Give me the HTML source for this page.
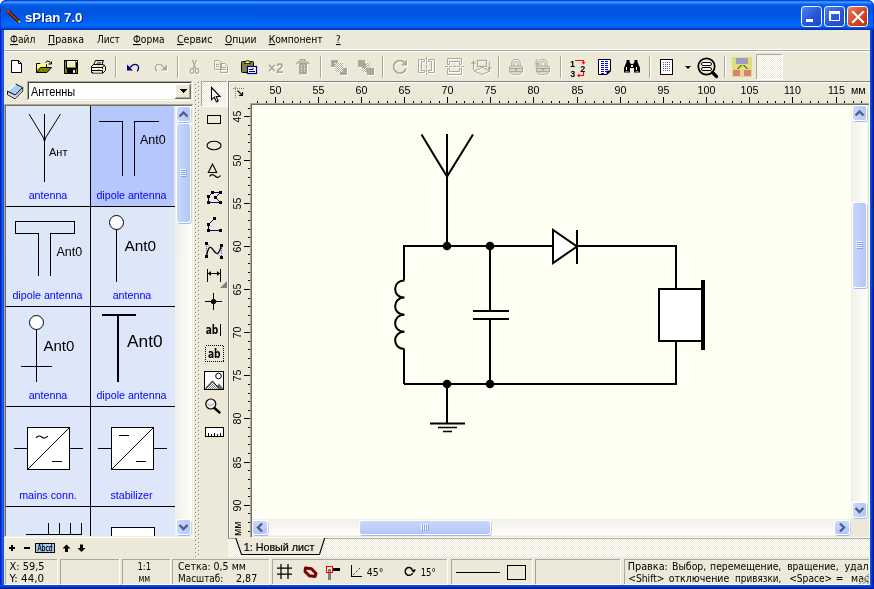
<!DOCTYPE html>
<html><head><meta charset="utf-8"><title>sPlan 7.0</title>
<style>
html,body{margin:0;padding:0;background:#ECE9D8;overflow:hidden}
svg{display:block;will-change:transform;opacity:0.9999}
text{white-space:pre}
.c{shape-rendering:crispEdges}
</style></head><body>
<svg width="874" height="589" viewBox="0 0 874 589">
<defs>
<pattern id="hatch" width="2" height="2" patternUnits="userSpaceOnUse"><rect width="2" height="2" fill="#ECE9D8"/><rect width="1" height="1" fill="#fff"/><rect x="1" y="1" width="1" height="1" fill="#fff"/></pattern>
<linearGradient id="tb" x1="0" y1="0" x2="0" y2="1"><stop offset="0.0167" stop-color="#0846D8"/><stop offset="0.0500" stop-color="#2E80F8"/><stop offset="0.0833" stop-color="#3C96FF"/><stop offset="0.1167" stop-color="#1478FC"/><stop offset="0.1500" stop-color="#0468F4"/><stop offset="0.1833" stop-color="#025EE8"/><stop offset="0.2167" stop-color="#0058E2"/><stop offset="0.2500" stop-color="#0056E0"/><stop offset="0.2833" stop-color="#0055DF"/><stop offset="0.3167" stop-color="#0055DF"/><stop offset="0.3500" stop-color="#0055DF"/><stop offset="0.3833" stop-color="#0056E0"/><stop offset="0.4167" stop-color="#0056E1"/><stop offset="0.4500" stop-color="#0057E2"/><stop offset="0.4833" stop-color="#0057E3"/><stop offset="0.5167" stop-color="#0058E4"/><stop offset="0.5500" stop-color="#005AE6"/><stop offset="0.5833" stop-color="#005CE9"/><stop offset="0.6167" stop-color="#005EEC"/><stop offset="0.6500" stop-color="#0060F0"/><stop offset="0.6833" stop-color="#0062F3"/><stop offset="0.7167" stop-color="#0064F6"/><stop offset="0.7500" stop-color="#0066F9"/><stop offset="0.7833" stop-color="#0067FB"/><stop offset="0.8167" stop-color="#0068FC"/><stop offset="0.8500" stop-color="#0068FC"/><stop offset="0.8833" stop-color="#0064F6"/><stop offset="0.9167" stop-color="#0056E2"/><stop offset="0.9500" stop-color="#0042CC"/><stop offset="0.9833" stop-color="#0033BE"/></linearGradient>
<linearGradient id="sbv" x1="0" y1="0" x2="1" y2="0"><stop offset="0" stop-color="#F1EFE8"/><stop offset="1" stop-color="#FEFEFB"/></linearGradient>
<linearGradient id="sbh" x1="0" y1="0" x2="0" y2="1"><stop offset="0" stop-color="#F1EFE8"/><stop offset="1" stop-color="#FEFEFB"/></linearGradient>
<linearGradient id="thv" x1="0" y1="0" x2="1" y2="0"><stop offset="0" stop-color="#C9D8FC"/><stop offset="0.6" stop-color="#BDCDFA"/><stop offset="1" stop-color="#B4C6F8"/></linearGradient>
<linearGradient id="thh" x1="0" y1="0" x2="0" y2="1"><stop offset="0" stop-color="#C9D8FC"/><stop offset="0.6" stop-color="#BDCDFA"/><stop offset="1" stop-color="#B4C6F8"/></linearGradient>
<linearGradient id="btnb" x1="0" y1="0" x2="1" y2="1"><stop offset="0" stop-color="#4F86F2"/><stop offset="0.5" stop-color="#2759DC"/><stop offset="1" stop-color="#1D48C8"/></linearGradient>
<linearGradient id="btnr" x1="0" y1="0" x2="1" y2="1"><stop offset="0" stop-color="#EE8466"/><stop offset="0.5" stop-color="#D7482A"/><stop offset="1" stop-color="#B6300F"/></linearGradient>
<pattern id="dots" width="2" height="2" patternUnits="userSpaceOnUse"><rect width="2" height="2" fill="#fff"/><rect width="1" height="1" fill="#ACA899"/><rect x="1" y="1" width="1" height="1" fill="#ACA899"/></pattern>
<pattern id="dots2" width="2" height="2" patternUnits="userSpaceOnUse"><rect width="2" height="2" fill="#fff"/><rect width="1" height="1" fill="#808080"/><rect x="1" y="1" width="1" height="1" fill="#808080"/></pattern>
<pattern id="grip" x="195" y="82" width="6" height="4" patternUnits="userSpaceOnUse"><rect x="3" y="0" width="1" height="1" fill="#85826F"/><rect x="4" y="1" width="1" height="1" fill="#fff"/><rect x="0" y="2" width="1" height="1" fill="#85826F"/><rect x="1" y="3" width="1" height="1" fill="#fff"/></pattern>
</defs>
<rect x="0" y="0" width="874" height="589" fill="#ECE9D8" />
<rect x="0" y="0" width="874" height="10" fill="#fff" />
<path d="M0,30 V7 Q0,0 7,0 H867 Q874,0 874,7 V30 Z" fill="url(#tb)"/>
<path d="M0.5,30 V7 Q0.5,0.5 7,0.5 M867,0.5 Q873.5,0.5 873.5,7 V30" fill="none" stroke="#0831C8" stroke-width="1"/>
<rect x="0" y="30" width="1" height="559" fill="#0019CF" class="c"/>
<rect x="1" y="30" width="1" height="559" fill="#0441D8" class="c"/>
<rect x="2" y="30" width="1" height="559" fill="#1663EA" class="c"/>
<rect x="3" y="30" width="1" height="559" fill="#0855DD" class="c"/>
<rect x="870" y="30" width="1" height="559" fill="#0A4CE4" class="c"/>
<rect x="871" y="30" width="1" height="559" fill="#0540DC" class="c"/>
<rect x="872" y="30" width="1" height="559" fill="#0230B8" class="c"/>
<rect x="873" y="30" width="1" height="559" fill="#001A90" class="c"/>
<rect x="0" y="585" width="874" height="1" fill="#0A4CE4" class="c"/>
<rect x="0" y="586" width="874" height="1" fill="#0540DC" class="c"/>
<rect x="0" y="587" width="874" height="1" fill="#0230B8" class="c"/>
<rect x="0" y="588" width="874" height="1" fill="#001A90" class="c"/>
<g stroke-linecap="round"><line x1="8" y1="11.5" x2="18.8" y2="21.3" stroke="#1a0a00" stroke-width="3.2"/><line x1="8.2" y1="11.6" x2="18" y2="20.5" stroke="#B83A10" stroke-width="1.6"/><circle cx="8" cy="11.4" r="1.3" fill="#E03020"/><circle cx="19.2" cy="21.7" r="1.1" fill="#F0E020"/></g>
<text x="26" y="22.7" font-family='"Liberation Sans",sans-serif' font-size="13.6" fill="#0A1C8C" text-anchor="start" font-weight="bold" textLength="57.5" lengthAdjust="spacingAndGlyphs" >sPlan 7.0</text>
<text x="25" y="21.7" font-family='"Liberation Sans",sans-serif' font-size="13.6" fill="#fff" text-anchor="start" font-weight="bold" textLength="57.5" lengthAdjust="spacingAndGlyphs" >sPlan 7.0</text>
<rect x="801.5" y="6.5" width="20" height="20" rx="3" ry="3" fill="url(#btnb)" stroke="#fff" stroke-width="1"/>
<rect x="824.5" y="6.5" width="20" height="20" rx="3" ry="3" fill="url(#btnb)" stroke="#fff" stroke-width="1"/>
<rect x="847.5" y="6.5" width="20" height="20" rx="3" ry="3" fill="url(#btnr)" stroke="#fff" stroke-width="1"/>
<rect x="806" y="19" width="7" height="3" fill="#fff" class="c"/>
<rect x="830" y="11.5" width="9" height="9" fill="none" stroke="#fff" stroke-width="1" class="c"/>
<rect x="829" y="11" width="11" height="3" fill="#fff" class="c"/>
<rect x="829" y="11" width="1" height="10" fill="#fff" class="c"/>
<rect x="839" y="11" width="1" height="10" fill="#fff" class="c"/>
<rect x="829" y="20" width="11" height="1" fill="#fff" class="c"/>
<path d="M853,12 L863,22 M863,12 L853,22" stroke="#fff" stroke-width="2.2" stroke-linecap="square"/>
<text x="10" y="43" font-family='"DejaVu Sans Condensed","Liberation Sans",sans-serif' font-size="11" fill="#000" text-anchor="start" font-weight="normal" textLength="25.4" lengthAdjust="spacingAndGlyphs" ><tspan text-decoration="underline">Ф</tspan>айл</text>
<text x="48" y="43" font-family='"DejaVu Sans Condensed","Liberation Sans",sans-serif' font-size="11" fill="#000" text-anchor="start" font-weight="normal" textLength="36.2" lengthAdjust="spacingAndGlyphs" ><tspan text-decoration="underline">П</tspan>равка</text>
<text x="97" y="43" font-family='"DejaVu Sans Condensed","Liberation Sans",sans-serif' font-size="11" fill="#000" text-anchor="start" font-weight="normal" textLength="22.8" lengthAdjust="spacingAndGlyphs" >Лист</text>
<text x="133" y="43" font-family='"DejaVu Sans Condensed","Liberation Sans",sans-serif' font-size="11" fill="#000" text-anchor="start" font-weight="normal" textLength="31.6" lengthAdjust="spacingAndGlyphs" ><tspan text-decoration="underline">Ф</tspan>орма</text>
<text x="177" y="43" font-family='"DejaVu Sans Condensed","Liberation Sans",sans-serif' font-size="11" fill="#000" text-anchor="start" font-weight="normal" textLength="35.4" lengthAdjust="spacingAndGlyphs" ><tspan text-decoration="underline">С</tspan>ервис</text>
<text x="225" y="43" font-family='"DejaVu Sans Condensed","Liberation Sans",sans-serif' font-size="11" fill="#000" text-anchor="start" font-weight="normal" textLength="31.5" lengthAdjust="spacingAndGlyphs" ><tspan text-decoration="underline">О</tspan>пции</text>
<text x="268.7" y="43" font-family='"DejaVu Sans Condensed","Liberation Sans",sans-serif' font-size="11" fill="#000" text-anchor="start" font-weight="normal" textLength="53.9" lengthAdjust="spacingAndGlyphs" ><tspan text-decoration="underline">К</tspan>омпонент</text>
<text x="336" y="43" font-family='"DejaVu Sans Condensed","Liberation Sans",sans-serif' font-size="11" fill="#000" text-anchor="start" font-weight="normal" textLength="4.6" lengthAdjust="spacingAndGlyphs" ><tspan text-decoration="underline">?</tspan></text>
<rect x="4" y="49" width="866" height="1" fill="#fff" />
<rect x="4" y="50" width="866" height="1" fill="#ACA899" />
<rect x="4" y="51" width="866" height="1" fill="#fff" />
<rect x="115" y="56" width="1" height="22" fill="#ACA899" />
<rect x="116" y="56" width="1" height="22" fill="#fff" />
<rect x="177" y="56" width="1" height="22" fill="#ACA899" />
<rect x="178" y="56" width="1" height="22" fill="#fff" />
<rect x="320" y="56" width="1" height="22" fill="#ACA899" />
<rect x="321" y="56" width="1" height="22" fill="#fff" />
<rect x="382" y="56" width="1" height="22" fill="#ACA899" />
<rect x="383" y="56" width="1" height="22" fill="#fff" />
<rect x="498" y="56" width="1" height="22" fill="#ACA899" />
<rect x="499" y="56" width="1" height="22" fill="#fff" />
<rect x="560" y="56" width="1" height="22" fill="#ACA899" />
<rect x="561" y="56" width="1" height="22" fill="#fff" />
<rect x="649" y="56" width="1" height="22" fill="#ACA899" />
<rect x="650" y="56" width="1" height="22" fill="#fff" />
<rect x="724" y="56" width="1" height="22" fill="#ACA899" />
<rect x="725" y="56" width="1" height="22" fill="#fff" />
<g transform="translate(11,60)"><path d="M0.5,0.5 H7.5 L10.5,3.5 V12.5 H0.5 Z" fill="#fff" stroke="#000"/><path d="M7.5,0.5 V3.5 H10.5" fill="none" stroke="#000"/></g>
<g transform="translate(36,60)"><path d="M9.5,2.5 Q11,0.2 13.5,1.5 L14.5,3.5" fill="none" stroke="#000" stroke-width="1"/><path d="M12.5,4 H15.5 V1.5" fill="none" stroke="#000"/>
<path d="M0.5,12.5 V3.5 H4 L5,4.5 H10.5 V7" fill="#E8E800" stroke="#000"/>
<rect x="1" y="4" width="9" height="4" fill="#FFFF80"/>
<path d="M0.5,12.5 L4.5,7.5 H15.5 L11,12.5 Z" fill="#808000" stroke="#000"/></g>
<g transform="translate(64,60)" class=c><rect x="0" y="0" width="14" height="14" fill="#000"/><rect x="1" y="1" width="12" height="12" fill="#808000"/>
<rect x="3" y="1" width="8" height="6" fill="#ECE9D8"/><rect x="3" y="1" width="8" height="1" fill="#fff"/><rect x="2" y="0" width="10" height="8" fill="none" stroke="#000" stroke-width="1"/>
<rect x="12" y="1" width="1" height="1" fill="#fff"/>
<rect x="3" y="9" width="9" height="5" fill="#000"/><rect x="9" y="10" width="2" height="3" fill="#ECE9D8"/></g>
<g transform="translate(90,60)"><path d="M3.5,5.5 L5.5,0.5 H13.5 L11.5,5.5 Z" fill="#fff" stroke="#000"/><path d="M7,2.3 H11.5 M6.3,3.8 H10.8" stroke="#000" stroke-width="0.7"/>
<path d="M1.5,6.5 L3.5,4.5 H13 L15.5,6.5 V10.5 L13.5,12.5 H1.5 Z" fill="#ECE9D8" stroke="#000"/>
<rect x="1" y="7" width="12" height="2" fill="#000"/><rect x="2" y="8" width="10" height="2" fill="#fff"/><rect x="7" y="9" width="3" height="1" fill="#E8E800"/>
<path d="M1.5,10.5 H12.5 V12.5 M12.5,7 L15,5" fill="none" stroke="#000"/>
<rect x="2" y="12" width="11" height="1.6" fill="#000"/><rect x="3" y="12.3" width="9" height="0.8" fill="#fff"/></g>
<g transform="translate(126,63)"><path d="M1,1.5 V7.5 H7 Z" fill="#000080"/><path d="M4,4.5 Q7.5,0.3 11,1.8 Q14,4 11.3,8.3" fill="none" stroke="#000080" stroke-width="1.3"/></g>
<g transform="translate(154,64)"><path d="M14,1.5 V7.5 H8 Z" fill="#fff"/><path d="M11,4.5 Q7.5,0.3 4,1.8 Q1,4 3.7,8.3" fill="none" stroke="#fff" stroke-width="1.3"/></g>
<g transform="translate(153,63)"><path d="M14,1.5 V7.5 H8 Z" fill="#ACA899"/><path d="M11,4.5 Q7.5,0.3 4,1.8 Q1,4 3.7,8.3" fill="none" stroke="#ACA899" stroke-width="1.3"/></g>
<g transform="translate(191,61)"><path d="M2.5,0 L6,9 M6.5,0 L3,9" stroke="#fff" stroke-width="1.3" fill="none"/><ellipse cx="2" cy="11" rx="1.8" ry="2.3" fill="none" stroke="#fff" stroke-width="1.2"/><ellipse cx="7" cy="11" rx="1.8" ry="2.3" fill="none" stroke="#fff" stroke-width="1.2"/></g>
<g transform="translate(190,60)"><path d="M2.5,0 L6,9 M6.5,0 L3,9" stroke="#ACA899" stroke-width="1.3" fill="none"/><ellipse cx="2" cy="11" rx="1.8" ry="2.3" fill="none" stroke="#ACA899" stroke-width="1.2"/><ellipse cx="7" cy="11" rx="1.8" ry="2.3" fill="none" stroke="#ACA899" stroke-width="1.2"/></g>
<g transform="translate(215,61)"><path d="M0.5,0.5 H5 L7.5,3 V9.5 H0.5 Z M6.5,3.5 H11 L13.5,6 V12.5 H6.5 Z" fill="none" stroke="#fff" stroke-width="1"/><path d="M2,4.5 H5 M2,6.5 H5 M8,7.5 H12 M8,9.5 H12" stroke="#fff" stroke-width="1"/></g>
<g transform="translate(214,60)"><path d="M0.5,0.5 H5 L7.5,3 V9.5 H0.5 Z M6.5,3.5 H11 L13.5,6 V12.5 H6.5 Z" fill="none" stroke="#ACA899" stroke-width="1"/><path d="M2,4.5 H5 M2,6.5 H5 M8,7.5 H12 M8,9.5 H12" stroke="#ACA899" stroke-width="1"/></g>
<g transform="translate(241,60)"><rect x="0.5" y="1.5" width="12" height="11" rx="1" fill="#808040" stroke="#000"/>
<path d="M3.5,3.5 L5,0.8 H8 L9.5,3.5 Z" fill="#FFFF40" stroke="#000" stroke-width="0.8"/>
<rect x="6.5" y="6.5" width="9" height="7" fill="#fff" stroke="#000080" stroke-width="1.2"/><path d="M8,9.5 H12 V8 M8,11.5 H14" stroke="#000080" stroke-width="1" fill="none"/></g>
<text x="269" y="73.5" font-family='"Liberation Sans",sans-serif' font-size="15" fill="#fff" text-anchor="start" font-weight="bold" textLength="15.4" lengthAdjust="spacingAndGlyphs" >×2</text>
<text x="268" y="72.5" font-family='"Liberation Sans",sans-serif' font-size="15" fill="#ACA899" text-anchor="start" font-weight="bold" textLength="15.4" lengthAdjust="spacingAndGlyphs" >×2</text>
<g transform="translate(297,60)"><path d="M4.5,2 V0.7 H9 V2 M1.5,3 H12 M0.3,5.2 L2,3.6 M13.3,5.2 L11.6,3.6" stroke="#fff" fill="none" stroke-width="1.5"/><rect x="3" y="4" width="8" height="11.3" fill="#fff"/><path d="M5.5,6 V13 M8.5,6 V13" stroke="#ECE9D8" stroke-width="0.8" stroke-dasharray="2 1"/></g>
<g transform="translate(296,59)"><path d="M4.5,2 V0.7 H9 V2 M1.5,3 H12 M0.3,5.2 L2,3.6 M13.3,5.2 L11.6,3.6" stroke="#ACA899" fill="none" stroke-width="1.5"/><rect x="3" y="4" width="8" height="11.3" fill="#ACA899"/><path d="M5.5,6 V13 M8.5,6 V13" stroke="#ECE9D8" stroke-width="0.8" stroke-dasharray="2 1"/></g>
<g transform="translate(332,61)" class=c><rect x="0" y="0" width="7" height="7" fill="#fff"/><rect x="9" y="8" width="7" height="7" fill="#fff"/></g>
<g transform="translate(331,60)" class=c><rect x="0" y="0" width="7" height="7" fill="#ACA899"/><rect x="9" y="8" width="7" height="7" fill="#ACA899"/><rect x="4" y="3" width="8" height="9" fill="url(#dots)"/></g>
<g transform="translate(359,61)" class=c><rect x="0" y="0" width="7" height="7" fill="#fff"/><rect x="9" y="8" width="7" height="7" fill="#fff"/></g>
<g transform="translate(358,60)" class=c><rect x="0" y="0" width="7" height="7" fill="#ACA899"/><rect x="9" y="8" width="7" height="7" fill="#ACA899"/><rect x="4" y="3" width="8" height="9" fill="url(#dots)"/><rect x="4" y="3" width="4" height="5" fill="#ACA899"/><rect x="8" y="8" width="4" height="4" fill="#ACA899"/></g>
<g transform="translate(393,60)"><path d="M12.5,3.5 A6.3,6.3 0 1 0 14,9.5" fill="none" stroke="#fff" stroke-width="1.8"/><path d="M9,6.5 H15 V0.5 Z" fill="#fff"/></g>
<g transform="translate(392,59)"><path d="M12.5,3.5 A6.3,6.3 0 1 0 14,9.5" fill="none" stroke="#ACA899" stroke-width="1.8"/><path d="M9,6.5 H15 V0.5 Z" fill="#ACA899"/></g>
<g transform="translate(419,60)"><path d="M0.5,0.5 H6.5 V2.5 H3.5 V11.5 H6.5 V13.5 H0.5 Z M16.5,0.5 H10.5 V2.5 H13.5 V11.5 H10.5 V13.5 H16.5 Z" fill="none" stroke="#fff" stroke-width="1"/><path d="M8.5,-2 V16" stroke="#fff" stroke-width="1" stroke-dasharray="3 1"/></g>
<g transform="translate(418,59)"><path d="M0.5,0.5 H6.5 V2.5 H3.5 V11.5 H6.5 V13.5 H0.5 Z M16.5,0.5 H10.5 V2.5 H13.5 V11.5 H10.5 V13.5 H16.5 Z" fill="none" stroke="#ACA899" stroke-width="1"/><path d="M8.5,-2 V16" stroke="#ACA899" stroke-width="1" stroke-dasharray="3 1"/></g>
<g transform="translate(448,59)"><path d="M0.5,6.5 V0.5 H14.5 V6.5 H12.5 V3.5 H2.5 V6.5 Z M0.5,10.5 V16.5 H14.5 V10.5 H12.5 V13.5 H2.5 V10.5 Z" fill="none" stroke="#fff" stroke-width="1"/><path d="M-2,8.5 H17" stroke="#fff" stroke-width="1" stroke-dasharray="3 1"/></g>
<g transform="translate(447,58)"><path d="M0.5,6.5 V0.5 H14.5 V6.5 H12.5 V3.5 H2.5 V6.5 Z M0.5,10.5 V16.5 H14.5 V10.5 H12.5 V13.5 H2.5 V10.5 Z" fill="none" stroke="#ACA899" stroke-width="1"/><path d="M-2,8.5 H17" stroke="#ACA899" stroke-width="1" stroke-dasharray="3 1"/></g>
<g transform="translate(472,61)"><rect x="6.5" y="0.5" width="9" height="6" fill="none" stroke="#fff" stroke-width="1.3"/><path d="M2.5,10 V2 M0.5,4 L2.5,1.5 L4.5,4 M18.5,2 V9 M16.5,7 L18.5,9.5 L20.5,7" fill="none" stroke="#fff" stroke-width="1.2"/><path d="M3,11 L11,7.5 L19,11 L11,14.5 Z" fill="none" stroke="#fff" stroke-width="1"/></g>
<g transform="translate(471,60)"><rect x="6.5" y="0.5" width="9" height="6" fill="none" stroke="#ACA899" stroke-width="1.3"/><path d="M2.5,10 V2 M0.5,4 L2.5,1.5 L4.5,4 M18.5,2 V9 M16.5,7 L18.5,9.5 L20.5,7" fill="none" stroke="#ACA899" stroke-width="1.2"/><path d="M3,11 L11,7.5 L19,11 L11,14.5 Z" fill="none" stroke="#ACA899" stroke-width="1"/></g>
<g transform="translate(510,60)"><path d="M2.8,7 V4 Q2.8,0.5 7,0.5 Q11.2,0.5 11.2,4 V7 M5,7 V4.3 Q5,2.6 7,2.6 Q9,2.6 9,4.3 V7" fill="none" stroke="#fff" stroke-width="1"/><path d="M0.5,8.5 Q0.5,7 2,7 H12 Q13.5,7 13.5,8.5 V12 Q13,15.5 7,15.5 Q1,15.5 0.5,12 Z" fill="#ECE9D8" stroke="#fff" stroke-width="1"/><path d="M1,9.5 H13 M1,12.5 H13" stroke="#fff" stroke-width="1.4"/><path d="M5.5,9.5 H8.5 L7,13.5 Z" fill="#fff"/></g>
<g transform="translate(509,59)"><path d="M2.8,7 V4 Q2.8,0.5 7,0.5 Q11.2,0.5 11.2,4 V7 M5,7 V4.3 Q5,2.6 7,2.6 Q9,2.6 9,4.3 V7" fill="none" stroke="#ACA899" stroke-width="1"/><path d="M0.5,8.5 Q0.5,7 2,7 H12 Q13.5,7 13.5,8.5 V12 Q13,15.5 7,15.5 Q1,15.5 0.5,12 Z" fill="#ECE9D8" stroke="#ACA899" stroke-width="1"/><path d="M1,9.5 H13 M1,12.5 H13" stroke="#ACA899" stroke-width="1.4"/><path d="M5.5,9.5 H8.5 L7,13.5 Z" fill="#ACA899"/></g>
<g transform="translate(537,60)"><path d="M2.8,7 V4 Q2.8,0.5 7,0.5 Q11.2,0.5 11.2,4 V7 M5,7 V4.3 Q5,2.6 7,2.6 Q9,2.6 9,4.3 V7" fill="none" stroke="#fff" stroke-width="1"/><path d="M0.5,8.5 Q0.5,7 2,7 H12 Q13.5,7 13.5,8.5 V12 Q13,15.5 7,15.5 Q1,15.5 0.5,12 Z" fill="#ECE9D8" stroke="#fff" stroke-width="1"/><path d="M1,9.5 H13 M1,12.5 H13" stroke="#fff" stroke-width="1.4"/><path d="M5.5,9.5 H8.5 L7,13.5 Z" fill="#fff"/><path d="M-1,2 L3,6 M-2,5 H3 M1,0 V6 M-1,8 L3,4" stroke="#fff" stroke-width="0.9"/></g>
<g transform="translate(536,59)"><path d="M2.8,7 V4 Q2.8,0.5 7,0.5 Q11.2,0.5 11.2,4 V7 M5,7 V4.3 Q5,2.6 7,2.6 Q9,2.6 9,4.3 V7" fill="none" stroke="#ACA899" stroke-width="1"/><path d="M0.5,8.5 Q0.5,7 2,7 H12 Q13.5,7 13.5,8.5 V12 Q13,15.5 7,15.5 Q1,15.5 0.5,12 Z" fill="#ECE9D8" stroke="#ACA899" stroke-width="1"/><path d="M1,9.5 H13 M1,12.5 H13" stroke="#ACA899" stroke-width="1.4"/><path d="M5.5,9.5 H8.5 L7,13.5 Z" fill="#ACA899"/><path d="M-1,2 L3,6 M-2,5 H3 M1,0 V6 M-1,8 L3,4" stroke="#ACA899" stroke-width="0.9"/></g>
<g transform="translate(570,59)"><path d="M5,1.5 H13.5 V4 M13.5,12.5 V16.5 H8" fill="none" stroke="#FF0000" stroke-width="1.2"/><path d="M11.5,3 H15.5 L13.5,5.5 Z M9.5,14.5 V18.5 L7,16.5 Z" fill="#FF0000"/></g>
<text x="570" y="66.5" font-family='"Liberation Sans",sans-serif' font-size="9" fill="#000" text-anchor="start" font-weight="bold" >1</text>
<text x="580.3" y="72" font-family='"Liberation Sans",sans-serif' font-size="9" fill="#000" text-anchor="start" font-weight="bold" >2</text>
<text x="570.3" y="77" font-family='"Liberation Sans",sans-serif' font-size="9" fill="#000" text-anchor="start" font-weight="bold" >3</text>
<g transform="translate(598,59)"><path d="M0.5,0.5 H12.5 V12 L9,15.5 H0.5 Z" fill="#fff" stroke="#000"/><path d="M12.5,12 H9 V15.5" fill="#000" stroke="#000" stroke-width="0.8"/>
<rect x="3" y="2" width="3" height="1" fill="#0000FF" class="c"/><rect x="7" y="2" width="3" height="1" fill="#0000FF" class="c"/><rect x="3" y="4" width="3" height="1" fill="#0000FF" class="c"/><rect x="7" y="4" width="3" height="1" fill="#0000FF" class="c"/><rect x="3" y="6" width="3" height="1" fill="#0000FF" class="c"/><rect x="7" y="6" width="3" height="1" fill="#0000FF" class="c"/><rect x="3" y="8" width="3" height="1" fill="#0000FF" class="c"/><rect x="7" y="8" width="3" height="1" fill="#0000FF" class="c"/><rect x="3" y="10" width="3" height="1" fill="#0000FF" class="c"/><rect x="7" y="10" width="3" height="1" fill="#0000FF" class="c"/><rect x="3" y="12" width="3" height="1" fill="#0000FF" class="c"/><rect x="7" y="12" width="3" height="1" fill="#0000FF" class="c"/><rect x="3" y="14" width="3" height="1" fill="#0000FF" class="c"/></g>
<g transform="translate(624,60)"><path d="M2.5,0 H5.5 V2 L7,4 H9 L10.5,2 V0 H13.5 V2 L16,8 V12.5 H10 V8 H6 V12.5 H0 V8 L2.5,2 Z" fill="#000"/><rect x="2" y="7" width="1" height="3" fill="#fff"/><rect x="12" y="7" width="1" height="3" fill="#fff"/><rect x="7" y="5" width="2" height="2" fill="#ECE9D8"/><rect x="1.5" y="11" width="3" height="1" fill="#888"/><rect x="11.5" y="11" width="3" height="1" fill="#888"/></g>
<g transform="translate(660,59)" class=c><rect x="0.5" y="0.5" width="12" height="15" fill="#fff" stroke="#000"/><rect x="3" y="3" width="1" height="1" fill="#5A5AA0"/><rect x="3" y="5" width="1" height="1" fill="#5A5AA0"/><rect x="3" y="7" width="1" height="1" fill="#5A5AA0"/><rect x="3" y="9" width="1" height="1" fill="#5A5AA0"/><rect x="3" y="11" width="1" height="1" fill="#5A5AA0"/><rect x="5" y="3" width="1" height="1" fill="#5A5AA0"/><rect x="5" y="5" width="1" height="1" fill="#5A5AA0"/><rect x="5" y="7" width="1" height="1" fill="#5A5AA0"/><rect x="5" y="9" width="1" height="1" fill="#5A5AA0"/><rect x="5" y="11" width="1" height="1" fill="#5A5AA0"/><rect x="7" y="3" width="1" height="1" fill="#5A5AA0"/><rect x="7" y="5" width="1" height="1" fill="#5A5AA0"/><rect x="7" y="7" width="1" height="1" fill="#5A5AA0"/><rect x="7" y="9" width="1" height="1" fill="#5A5AA0"/><rect x="7" y="11" width="1" height="1" fill="#5A5AA0"/><rect x="9" y="3" width="1" height="1" fill="#5A5AA0"/><rect x="9" y="5" width="1" height="1" fill="#5A5AA0"/><rect x="9" y="7" width="1" height="1" fill="#5A5AA0"/><rect x="9" y="9" width="1" height="1" fill="#5A5AA0"/><rect x="9" y="11" width="1" height="1" fill="#5A5AA0"/></g>
<path d="M685,66 H691 L688,69 Z" fill="#000"/>
<g transform="translate(697,57)"><circle cx="9.5" cy="9.5" r="8.2" fill="#ECE9D8" stroke="#000" stroke-width="1.7"/><path d="M15.5,15.5 L19.5,19.5" stroke="#000" stroke-width="3.2" stroke-linecap="round"/>
<rect x="4.5" y="5.5" width="10" height="3" rx="1.5" fill="#fff" stroke="#000" stroke-width="1"/><rect x="4.5" y="10.5" width="10" height="3" rx="1.5" fill="#fff" stroke="#000" stroke-width="1"/></g>
<g transform="translate(732,57)" class=c><rect width="20" height="20" fill="#DEDE7C"/><rect x="4" y="1" width="12" height="6" fill="#9C9CC8"/><rect x="1" y="13" width="7" height="6" fill="#E07C7C"/><rect x="12" y="13" width="7" height="6" fill="#E07C7C"/></g>
<path d="M741.5,65 L737.5,69 M743.5,65 L747.5,69" stroke="#000" stroke-width="0.9"/>
<rect x="756" y="54" width="27" height="26" fill="url(#hatch)" class="c"/>
<rect x="756" y="54" width="27" height="1" fill="#ACA899" />
<rect x="756" y="54" width="1" height="26" fill="#ACA899" />
<rect x="756" y="79" width="27" height="1" fill="#fff" />
<rect x="782" y="54" width="1" height="26" fill="#fff" />
<path d="M7.5,91.2 V94.6 L15,98.8 L22.7,91 V87.5 L15.2,95 Z" fill="#fff" stroke="#000" stroke-width="0.9" stroke-linejoin="round"/>
<path d="M8.2,93.2 L15.1,96.9 L22.3,89.6" fill="none" stroke="#A8CCF4" stroke-width="0.9"/>
<path d="M7.5,91.2 L15.7,84 L22.7,87.5 L15.2,95 Z" fill="#A8CCF4"/>
<path d="M8,90.9 L15.6,84.3" stroke="#fff" stroke-width="1.1"/>
<path d="M15.7,84 L22.7,87.5 L15.2,95 L7.5,91.2" fill="none" stroke="#000" stroke-width="0.9" stroke-linejoin="round"/>
<rect x="27" y="81" width="166" height="20" fill="#fff" class="c"/>
<rect x="27" y="81" width="166" height="1" fill="#ACA899" />
<rect x="27" y="81" width="1" height="20" fill="#ACA899" />
<rect x="28" y="82" width="164" height="1" fill="#404040" />
<rect x="28" y="82" width="1" height="18" fill="#404040" />
<rect x="27" y="100" width="166" height="1" fill="#fff" />
<rect x="192" y="81" width="1" height="20" fill="#fff" />
<rect x="28" y="99" width="164" height="1" fill="#ECE9D8" />
<rect x="191" y="82" width="1" height="18" fill="#ECE9D8" />
<text x="30.9" y="95.8" font-family='"Liberation Sans",sans-serif' font-size="12.4" fill="#000" text-anchor="start" font-weight="normal" textLength="44.3" lengthAdjust="spacingAndGlyphs" >Антенны</text>
<rect x="175" y="84" width="16" height="15" fill="#ECE9D8" class="c"/>
<rect x="175" y="84" width="16" height="1" fill="#fff" />
<rect x="175" y="84" width="1" height="15" fill="#fff" />
<rect x="175" y="98" width="16" height="1" fill="#716F64" />
<rect x="190" y="84" width="1" height="15" fill="#716F64" />
<rect x="176" y="97" width="14" height="1" fill="#ACA899" />
<rect x="189" y="85" width="1" height="13" fill="#ACA899" />
<path d="M179,89 H187 L183,93 Z" fill="#000" class="c"/>
<rect x="6" y="106" width="169" height="430" fill="#DEE7F9" class="c"/>
<rect x="4" y="104" width="190" height="1" fill="#ACA899" />
<rect x="4" y="104" width="1" height="434" fill="#ACA899" />
<rect x="5" y="105" width="188" height="1" fill="#716F64" />
<rect x="5" y="105" width="1" height="432" fill="#716F64" />
<rect x="4" y="537" width="190" height="1" fill="#fff" />
<rect x="193" y="104" width="1" height="434" fill="#fff" />
<rect x="5" y="536" width="188" height="1" fill="#F1EFE2" />
<rect x="192" y="105" width="1" height="432" fill="#F1EFE2" />
<rect x="91" y="106" width="83" height="100" fill="#B5C7FE" class="c"/>
<rect x="90" y="106" width="1" height="430" fill="#000" />
<rect x="6" y="206" width="169" height="1" fill="#000" />
<rect x="6" y="306" width="169" height="1" fill="#000" />
<rect x="6" y="406" width="169" height="1" fill="#000" />
<rect x="6" y="506" width="169" height="1" fill="#000" />
<rect x="175" y="106" width="17" height="430" fill="url(#sbv)" class="c"/>
<rect x="177" y="107" width="14.6" height="16" rx="3" fill="#9DB9EE"/>
<rect x="176" y="106" width="15" height="16" rx="2.5" fill="#fff"/>
<rect x="177" y="107" width="13" height="14" rx="2" fill="url(#thv)"/>
<path d="M179.5,116.5 L183.5,112.5 L187.5,116.5" fill="none" stroke="#4D6185" stroke-width="2.4"/>
<rect x="177" y="520" width="14.6" height="16" rx="3" fill="#9DB9EE"/>
<rect x="176" y="519" width="15" height="16" rx="2.5" fill="#fff"/>
<rect x="177" y="520" width="13" height="14" rx="2" fill="url(#thv)"/>
<path d="M179.5,525.0 L183.5,529.0 L187.5,525.0" fill="none" stroke="#4D6185" stroke-width="2.4"/>
<rect x="177" y="124" width="14.6" height="100" rx="3" fill="#9DB9EE"/>
<rect x="176" y="123" width="15" height="100" rx="2.5" fill="#fff"/>
<rect x="177" y="124" width="13" height="98" rx="2" fill="url(#thv)"/>
<rect x="180" y="169" width="6" height="1" fill="#EEF4FE" class="c"/>
<rect x="181" y="170" width="6" height="1" fill="#8CA4E0" class="c"/>
<rect x="180" y="171" width="6" height="1" fill="#EEF4FE" class="c"/>
<rect x="181" y="172" width="6" height="1" fill="#8CA4E0" class="c"/>
<rect x="180" y="173" width="6" height="1" fill="#EEF4FE" class="c"/>
<rect x="181" y="174" width="6" height="1" fill="#8CA4E0" class="c"/>
<rect x="180" y="175" width="6" height="1" fill="#EEF4FE" class="c"/>
<rect x="181" y="176" width="6" height="1" fill="#8CA4E0" class="c"/>
<path d="M44.5,114 V182 M29,114 L44.5,139.5 L60.5,114" stroke="#000" fill="none" stroke-width="1"/><circle cx="44.5" cy="139.5" r="1.3" fill="#000"/>
<text x="49" y="156" font-family='"Liberation Sans",sans-serif' font-size="11" fill="#000" text-anchor="start" font-weight="normal" >Ант</text>
<text x="48" y="199" font-family='"Liberation Sans",sans-serif' font-size="10.7" fill="#0000FF" text-anchor="middle" font-weight="normal" >antenna</text>
<path d="M99,121.5 H122.5 V176 M134.5,176 V121.5 H159" stroke="#000" fill="none" class="c"/>
<text x="140" y="144" font-family='"Liberation Sans",sans-serif' font-size="12.5" fill="#000" text-anchor="start" font-weight="normal" >Ant0</text>
<text x="131.5" y="199" font-family='"Liberation Sans",sans-serif' font-size="10.7" fill="#0000FF" text-anchor="middle" font-weight="normal" >dipole antenna</text>
<path d="M38.5,276 V233.5 H15.5 V221.5 H74.5 V233.5 H50.5 V276" stroke="#000" fill="none" class="c"/>
<text x="56.5" y="256" font-family='"Liberation Sans",sans-serif' font-size="12.5" fill="#000" text-anchor="start" font-weight="normal" >Ant0</text>
<text x="47.5" y="299" font-family='"Liberation Sans",sans-serif' font-size="10.7" fill="#0000FF" text-anchor="middle" font-weight="normal" >dipole antenna</text>
<path d="M116.5,229 V282" stroke="#000" fill="none" class="c"/><circle cx="116.5" cy="222.5" r="7" fill="#fff" stroke="#000"/>
<text x="124.5" y="251" font-family='"Liberation Sans",sans-serif' font-size="15.4" fill="#000" text-anchor="start" font-weight="normal" >Ant0</text>
<text x="132" y="299" font-family='"Liberation Sans",sans-serif' font-size="10.7" fill="#0000FF" text-anchor="middle" font-weight="normal" >antenna</text>
<path d="M36.5,329 V382 M21,366.5 H52" stroke="#000" fill="none" class="c"/><circle cx="36.5" cy="322.5" r="7" fill="#fff" stroke="#000"/>
<text x="43.5" y="351" font-family='"Liberation Sans",sans-serif' font-size="15" fill="#000" text-anchor="start" font-weight="normal" >Ant0</text>
<text x="48" y="399" font-family='"Liberation Sans",sans-serif' font-size="10.7" fill="#0000FF" text-anchor="middle" font-weight="normal" >antenna</text>
<path d="M102,315 H136 M118,315 V382" stroke="#000" stroke-width="2" fill="none" class="c"/>
<text x="127" y="346.5" font-family='"Liberation Sans",sans-serif' font-size="17.3" fill="#000" text-anchor="start" font-weight="normal" >Ant0</text>
<text x="131.5" y="399" font-family='"Liberation Sans",sans-serif' font-size="10.7" fill="#0000FF" text-anchor="middle" font-weight="normal" >dipole antenna</text>
<rect x="27.5" y="427.5" width="42" height="42" fill="#fff" stroke="#000" class="c"/><path d="M27.5,469.5 L69.5,427.5" stroke="#000" fill="none"/>
<path d="M14,448.5 H27 M70,448.5 H83 M52,461.5 H62" stroke="#000" fill="none" class="c"/>
<rect x="111.5" y="427.5" width="42" height="42" fill="#fff" stroke="#000" class="c"/><path d="M111.5,469.5 L153.5,427.5" stroke="#000" fill="none"/>
<path d="M98,448.5 H111 M154,448.5 H167 M136,461.5 H146" stroke="#000" fill="none" class="c"/>
<path d="M36,437.8 Q38.5,434.6 41.8,437 Q44.8,439.4 47.8,436.2" stroke="#000" fill="none" stroke-width="1.1"/>
<path d="M119,435.5 H129" stroke="#000" fill="none" class="c"/>
<text x="48" y="498.7" font-family='"Liberation Sans",sans-serif' font-size="10.7" fill="#0000FF" text-anchor="middle" font-weight="normal" >mains conn.</text>
<text x="131.5" y="498.7" font-family='"Liberation Sans",sans-serif' font-size="10.7" fill="#0000FF" text-anchor="middle" font-weight="normal" >stabilizer</text>
<path d="M26,534.5 H82 M48.5,523 V535 M59.5,523 V535 M70.5,523 V535 M81.5,523 V535" stroke="#000" fill="none" class="c"/>
<path d="M111.5,536 V527.5 H154.5 V536" fill="#fff" stroke="#000" class="c"/>
<rect x="9" y="547" width="6" height="2" fill="#000" class="c"/>
<rect x="11" y="545" width="2" height="6" fill="#000" class="c"/>
<rect x="24" y="547" width="6" height="2" fill="#000" class="c"/>
<rect x="35" y="543" width="20" height="10" fill="#A6CAF0" class="c"/>
<rect x="35.5" y="543.5" width="19" height="9" fill="none" stroke="#000" class="c"/>
<text x="45" y="551" font-family='"DejaVu Sans Condensed","Liberation Sans",sans-serif' font-size="8.5" fill="#000" text-anchor="middle" font-weight="normal" textLength="15" lengthAdjust="spacingAndGlyphs" stroke="#000" stroke-width="0.25">Abcd</text>
<path d="M66.5,544.5 L70.5,548.5 H68 V552 H65 V548.5 H62.5 Z" fill="#000"/>
<path d="M81.5,552 L85.5,548 H83 V544.5 H80 V548 H77.5 Z" fill="#000"/>
<rect x="195" y="82" width="6" height="476" fill="url(#grip)" class="c"/>
<rect x="201" y="81" width="27" height="26" fill="url(#hatch)" class="c"/>
<rect x="201" y="81" width="27" height="1" fill="#ACA899" />
<rect x="201" y="81" width="1" height="26" fill="#ACA899" />
<rect x="201" y="106" width="27" height="1" fill="#fff" />
<rect x="227" y="81" width="1" height="26" fill="#fff" />
<path d="M211.5,87.5 V99.8 L214.3,97.2 L216.4,101.8 L218.2,101 L216.2,96.5 H220 Z" fill="#fff" stroke="#000" stroke-width="1.1" stroke-linejoin="miter"/>
<rect x="207.5" y="115.5" width="13" height="8" fill="none" stroke="#000" class="c"/>
<ellipse cx="214" cy="145.5" rx="7" ry="4.2" fill="none" stroke="#000" stroke-width="1.1"/>
<path d="M212.5,164 L208.3,172.5 H216.7 Z" fill="none" stroke="#000" stroke-width="1.1"/><path d="M209.5,176.5 Q212,173 215,176 Q218,179 220.5,175.5" fill="none" stroke="#000" stroke-width="1.2"/>
<path d="M212.5,192.5 L220.5,192.5 L215.5,197.5 L220.5,202.5 L208.5,202.5 L208.5,196.5 Z" fill="none" stroke="#000080" stroke-width="1"/>
<rect x="211" y="191" width="3" height="3" fill="#000" class="c"/>
<rect x="219" y="191" width="3" height="3" fill="#000" class="c"/>
<rect x="214" y="196" width="3" height="3" fill="#000" class="c"/>
<rect x="219" y="201" width="3" height="3" fill="#000" class="c"/>
<rect x="207" y="201" width="3" height="3" fill="#000" class="c"/>
<rect x="207" y="195" width="3" height="3" fill="#000" class="c"/>
<path d="M214.5,218.5 L208.5,224.5 L208.5,230.5 L220.5,230.5" fill="none" stroke="#000080" stroke-width="1"/>
<rect x="213" y="217" width="3" height="3" fill="#000" class="c"/>
<rect x="207" y="223" width="3" height="3" fill="#000" class="c"/>
<rect x="207" y="229" width="3" height="3" fill="#000" class="c"/>
<rect x="219" y="229" width="3" height="3" fill="#000" class="c"/>
<path d="M206.5,243.5 V256.5 M206.5,243.5 L221.5,257.5 M221.5,245.5 V257.5" fill="none" stroke="#0000FF" stroke-width="1" stroke-dasharray="1 1.4" opacity="0.85"/>
<path d="M206.5,256.5 C207.5,250 209,246.5 211,247.5 C213.5,249 215,254.5 217.5,253.5 C219.5,252.5 220.5,249 221.5,245.5" fill="none" stroke="#000" stroke-width="1.3"/>
<rect x="205" y="242" width="3" height="3" fill="#000" class="c"/>
<rect x="220" y="244" width="3" height="3" fill="#000" class="c"/>
<rect x="205" y="255" width="3" height="3" fill="#000" class="c"/>
<rect x="220" y="256" width="3" height="3" fill="#000" class="c"/>
<path d="M207.5,269 V282 M220.5,269 V282 M208,273.5 H220" stroke="#000" fill="none" class="c"/><path d="M208,273.5 L211,271 V276 Z M220,273.5 L217,271 V276 Z" fill="#000"/>
<path d="M220,288 H227 V281 Z" fill="#808080"/>
<path d="M205,301.5 H222 M213.5,293 V310" stroke="#000" class="c"/><circle cx="213.5" cy="301.5" r="2.6" fill="#000"/>
<text x="205.7" y="334" font-family='"DejaVu Sans Condensed","Liberation Sans",sans-serif' font-size="11.5" fill="#000" text-anchor="start" font-weight="bold" textLength="12.6" lengthAdjust="spacingAndGlyphs" >ab</text>
<rect x="220" y="324" width="1" height="12" fill="#000" />
<rect x="205.5" y="345.5" width="18" height="16" fill="none" stroke="#000" stroke-dasharray="1 1" class="c"/>
<text x="208" y="358" font-family='"DejaVu Sans Condensed","Liberation Sans",sans-serif' font-size="11.5" fill="#000" text-anchor="start" font-weight="bold" textLength="12.6" lengthAdjust="spacingAndGlyphs" >ab</text>
<rect x="204.5" y="371.5" width="19" height="18" fill="#fff" stroke="#000" class="c"/><circle cx="218.5" cy="376" r="2.8" fill="#fff" stroke="#000"/>
<path d="M214,389 L219,383.5 L223,388 V389 Z" fill="#707070"/><path d="M205.5,389 L212.5,381 L219.5,389 Z" fill="url(#dots2)"/><path d="M205.5,388.5 L212.5,381 L219,388.5" fill="none" stroke="#000" stroke-width="1"/>
<circle cx="210.8" cy="404" r="5" fill="#F0F0F0" stroke="#000" stroke-width="1.2"/><path d="M207.5,404 Q210.5,407 214,403" stroke="#A0A0A0" fill="none"/><path d="M214.5,408 L219.5,412.5" stroke="#000" stroke-width="2.4" stroke-linecap="round"/>
<rect x="205.5" y="427.5" width="18" height="9" fill="#fff" stroke="#000" class="c"/><path d="M208.5,433 V436 M211.5,434 V436 M214.5,433 V436 M217.5,434 V436 M220.5,433 V436" stroke="#000" class="c"/>
<rect x="228" y="81" width="642" height="1" fill="#808080" />
<rect x="228" y="81" width="1" height="457" fill="#808080" />
<rect x="229" y="82" width="640" height="1" fill="#fff" />
<rect x="229" y="82" width="1" height="455" fill="#fff" />
<rect x="869" y="82" width="1" height="456" fill="#fff" />
<rect x="252" y="105" width="599" height="414" fill="#FEFEF3" class="c"/>
<rect x="250" y="103" width="619" height="1" fill="#ACA899" />
<rect x="250" y="103" width="1" height="434" fill="#ACA899" />
<rect x="251" y="104" width="618" height="1" fill="#716F64" />
<rect x="251" y="104" width="1" height="433" fill="#716F64" />
<path d="M235.5,87 V99 M233,88.5 H244" stroke="#808080" stroke-dasharray="1 1" class="c"/><path d="M237.5,90.5 L242,95 M239,95.5 H242.5 V92" stroke="#000" fill="none" stroke-width="1.1"/>
<rect x="257" y="101" width="1" height="2" fill="#000" />
<rect x="266" y="101" width="1" height="2" fill="#000" />
<rect x="275" y="97" width="1" height="6" fill="#000" />
<text x="275.5" y="94" font-family='"Liberation Sans",sans-serif' font-size="10.7" fill="#000" text-anchor="middle" font-weight="normal" >50</text>
<rect x="283" y="101" width="1" height="2" fill="#000" />
<rect x="292" y="101" width="1" height="2" fill="#000" />
<rect x="300" y="101" width="1" height="2" fill="#000" />
<rect x="309" y="101" width="1" height="2" fill="#000" />
<rect x="318" y="97" width="1" height="6" fill="#000" />
<text x="318.5" y="94" font-family='"Liberation Sans",sans-serif' font-size="10.7" fill="#000" text-anchor="middle" font-weight="normal" >55</text>
<rect x="326" y="101" width="1" height="2" fill="#000" />
<rect x="335" y="101" width="1" height="2" fill="#000" />
<rect x="344" y="101" width="1" height="2" fill="#000" />
<rect x="352" y="101" width="1" height="2" fill="#000" />
<rect x="361" y="97" width="1" height="6" fill="#000" />
<text x="361.5" y="94" font-family='"Liberation Sans",sans-serif' font-size="10.7" fill="#000" text-anchor="middle" font-weight="normal" >60</text>
<rect x="369" y="101" width="1" height="2" fill="#000" />
<rect x="378" y="101" width="1" height="2" fill="#000" />
<rect x="387" y="101" width="1" height="2" fill="#000" />
<rect x="395" y="101" width="1" height="2" fill="#000" />
<rect x="404" y="97" width="1" height="6" fill="#000" />
<text x="404.5" y="94" font-family='"Liberation Sans",sans-serif' font-size="10.7" fill="#000" text-anchor="middle" font-weight="normal" >65</text>
<rect x="413" y="101" width="1" height="2" fill="#000" />
<rect x="421" y="101" width="1" height="2" fill="#000" />
<rect x="430" y="101" width="1" height="2" fill="#000" />
<rect x="439" y="101" width="1" height="2" fill="#000" />
<rect x="447" y="97" width="1" height="6" fill="#000" />
<text x="447.5" y="94" font-family='"Liberation Sans",sans-serif' font-size="10.7" fill="#000" text-anchor="middle" font-weight="normal" >70</text>
<rect x="456" y="101" width="1" height="2" fill="#000" />
<rect x="464" y="101" width="1" height="2" fill="#000" />
<rect x="473" y="101" width="1" height="2" fill="#000" />
<rect x="482" y="101" width="1" height="2" fill="#000" />
<rect x="490" y="97" width="1" height="6" fill="#000" />
<text x="490.5" y="94" font-family='"Liberation Sans",sans-serif' font-size="10.7" fill="#000" text-anchor="middle" font-weight="normal" >75</text>
<rect x="499" y="101" width="1" height="2" fill="#000" />
<rect x="508" y="101" width="1" height="2" fill="#000" />
<rect x="516" y="101" width="1" height="2" fill="#000" />
<rect x="525" y="101" width="1" height="2" fill="#000" />
<rect x="533" y="97" width="1" height="6" fill="#000" />
<text x="533.5" y="94" font-family='"Liberation Sans",sans-serif' font-size="10.7" fill="#000" text-anchor="middle" font-weight="normal" >80</text>
<rect x="542" y="101" width="1" height="2" fill="#000" />
<rect x="551" y="101" width="1" height="2" fill="#000" />
<rect x="559" y="101" width="1" height="2" fill="#000" />
<rect x="568" y="101" width="1" height="2" fill="#000" />
<rect x="577" y="97" width="1" height="6" fill="#000" />
<text x="577.5" y="94" font-family='"Liberation Sans",sans-serif' font-size="10.7" fill="#000" text-anchor="middle" font-weight="normal" >85</text>
<rect x="585" y="101" width="1" height="2" fill="#000" />
<rect x="594" y="101" width="1" height="2" fill="#000" />
<rect x="603" y="101" width="1" height="2" fill="#000" />
<rect x="611" y="101" width="1" height="2" fill="#000" />
<rect x="620" y="97" width="1" height="6" fill="#000" />
<text x="620.5" y="94" font-family='"Liberation Sans",sans-serif' font-size="10.7" fill="#000" text-anchor="middle" font-weight="normal" >90</text>
<rect x="628" y="101" width="1" height="2" fill="#000" />
<rect x="637" y="101" width="1" height="2" fill="#000" />
<rect x="646" y="101" width="1" height="2" fill="#000" />
<rect x="654" y="101" width="1" height="2" fill="#000" />
<rect x="663" y="97" width="1" height="6" fill="#000" />
<text x="663.5" y="94" font-family='"Liberation Sans",sans-serif' font-size="10.7" fill="#000" text-anchor="middle" font-weight="normal" >95</text>
<rect x="672" y="101" width="1" height="2" fill="#000" />
<rect x="680" y="101" width="1" height="2" fill="#000" />
<rect x="689" y="101" width="1" height="2" fill="#000" />
<rect x="697" y="101" width="1" height="2" fill="#000" />
<rect x="706" y="97" width="1" height="6" fill="#000" />
<text x="706.5" y="94" font-family='"Liberation Sans",sans-serif' font-size="10.7" fill="#000" text-anchor="middle" font-weight="normal" >100</text>
<rect x="715" y="101" width="1" height="2" fill="#000" />
<rect x="723" y="101" width="1" height="2" fill="#000" />
<rect x="732" y="101" width="1" height="2" fill="#000" />
<rect x="741" y="101" width="1" height="2" fill="#000" />
<rect x="749" y="97" width="1" height="6" fill="#000" />
<text x="749.5" y="94" font-family='"Liberation Sans",sans-serif' font-size="10.7" fill="#000" text-anchor="middle" font-weight="normal" >105</text>
<rect x="758" y="101" width="1" height="2" fill="#000" />
<rect x="767" y="101" width="1" height="2" fill="#000" />
<rect x="775" y="101" width="1" height="2" fill="#000" />
<rect x="784" y="101" width="1" height="2" fill="#000" />
<rect x="792" y="97" width="1" height="6" fill="#000" />
<text x="792.5" y="94" font-family='"Liberation Sans",sans-serif' font-size="10.7" fill="#000" text-anchor="middle" font-weight="normal" >110</text>
<rect x="801" y="101" width="1" height="2" fill="#000" />
<rect x="810" y="101" width="1" height="2" fill="#000" />
<rect x="818" y="101" width="1" height="2" fill="#000" />
<rect x="827" y="101" width="1" height="2" fill="#000" />
<rect x="836" y="97" width="1" height="6" fill="#000" />
<text x="836.5" y="94" font-family='"Liberation Sans",sans-serif' font-size="10.7" fill="#000" text-anchor="middle" font-weight="normal" >115</text>
<rect x="844" y="101" width="1" height="2" fill="#000" />
<rect x="853" y="101" width="1" height="2" fill="#000" />
<rect x="861" y="101" width="1" height="2" fill="#000" />
<text x="851" y="94" font-family='"Liberation Sans",sans-serif' font-size="10.7" fill="#000" text-anchor="start" font-weight="normal" >мм</text>
<rect x="248" y="108" width="2" height="1" fill="#000" />
<rect x="244" y="116" width="6" height="1" fill="#000" />
<text transform="translate(241,116.5) rotate(-90)" font-family='"Liberation Sans",sans-serif' font-size="10.7" text-anchor="middle">45</text>
<rect x="248" y="125" width="2" height="1" fill="#000" />
<rect x="248" y="134" width="2" height="1" fill="#000" />
<rect x="248" y="142" width="2" height="1" fill="#000" />
<rect x="248" y="151" width="2" height="1" fill="#000" />
<rect x="244" y="160" width="6" height="1" fill="#000" />
<text transform="translate(241,160.5) rotate(-90)" font-family='"Liberation Sans",sans-serif' font-size="10.7" text-anchor="middle">50</text>
<rect x="248" y="168" width="2" height="1" fill="#000" />
<rect x="248" y="177" width="2" height="1" fill="#000" />
<rect x="248" y="185" width="2" height="1" fill="#000" />
<rect x="248" y="194" width="2" height="1" fill="#000" />
<rect x="244" y="203" width="6" height="1" fill="#000" />
<text transform="translate(241,203.5) rotate(-90)" font-family='"Liberation Sans",sans-serif' font-size="10.7" text-anchor="middle">55</text>
<rect x="248" y="211" width="2" height="1" fill="#000" />
<rect x="248" y="220" width="2" height="1" fill="#000" />
<rect x="248" y="229" width="2" height="1" fill="#000" />
<rect x="248" y="237" width="2" height="1" fill="#000" />
<rect x="244" y="246" width="6" height="1" fill="#000" />
<text transform="translate(241,246.5) rotate(-90)" font-family='"Liberation Sans",sans-serif' font-size="10.7" text-anchor="middle">60</text>
<rect x="248" y="254" width="2" height="1" fill="#000" />
<rect x="248" y="263" width="2" height="1" fill="#000" />
<rect x="248" y="272" width="2" height="1" fill="#000" />
<rect x="248" y="280" width="2" height="1" fill="#000" />
<rect x="244" y="289" width="6" height="1" fill="#000" />
<text transform="translate(241,289.5) rotate(-90)" font-family='"Liberation Sans",sans-serif' font-size="10.7" text-anchor="middle">65</text>
<rect x="248" y="298" width="2" height="1" fill="#000" />
<rect x="248" y="306" width="2" height="1" fill="#000" />
<rect x="248" y="315" width="2" height="1" fill="#000" />
<rect x="248" y="324" width="2" height="1" fill="#000" />
<rect x="244" y="332" width="6" height="1" fill="#000" />
<text transform="translate(241,332.5) rotate(-90)" font-family='"Liberation Sans",sans-serif' font-size="10.7" text-anchor="middle">70</text>
<rect x="248" y="341" width="2" height="1" fill="#000" />
<rect x="248" y="349" width="2" height="1" fill="#000" />
<rect x="248" y="358" width="2" height="1" fill="#000" />
<rect x="248" y="367" width="2" height="1" fill="#000" />
<rect x="244" y="375" width="6" height="1" fill="#000" />
<text transform="translate(241,375.5) rotate(-90)" font-family='"Liberation Sans",sans-serif' font-size="10.7" text-anchor="middle">75</text>
<rect x="248" y="384" width="2" height="1" fill="#000" />
<rect x="248" y="393" width="2" height="1" fill="#000" />
<rect x="248" y="401" width="2" height="1" fill="#000" />
<rect x="248" y="410" width="2" height="1" fill="#000" />
<rect x="244" y="418" width="6" height="1" fill="#000" />
<text transform="translate(241,418.5) rotate(-90)" font-family='"Liberation Sans",sans-serif' font-size="10.7" text-anchor="middle">80</text>
<rect x="248" y="427" width="2" height="1" fill="#000" />
<rect x="248" y="436" width="2" height="1" fill="#000" />
<rect x="248" y="444" width="2" height="1" fill="#000" />
<rect x="248" y="453" width="2" height="1" fill="#000" />
<rect x="244" y="462" width="6" height="1" fill="#000" />
<text transform="translate(241,462.5) rotate(-90)" font-family='"Liberation Sans",sans-serif' font-size="10.7" text-anchor="middle">85</text>
<rect x="248" y="470" width="2" height="1" fill="#000" />
<rect x="248" y="479" width="2" height="1" fill="#000" />
<rect x="248" y="488" width="2" height="1" fill="#000" />
<rect x="248" y="496" width="2" height="1" fill="#000" />
<rect x="244" y="505" width="6" height="1" fill="#000" />
<text transform="translate(241,505.5) rotate(-90)" font-family='"Liberation Sans",sans-serif' font-size="10.7" text-anchor="middle">90</text>
<rect x="248" y="513" width="2" height="1" fill="#000" />
<rect x="248" y="522" width="2" height="1" fill="#000" />
<rect x="248" y="531" width="2" height="1" fill="#000" />
<text transform="translate(241,536) rotate(-90)" font-family='"Liberation Sans",sans-serif' font-size="10.7">мм</text>
<rect x="851" y="105" width="16" height="414" fill="url(#sbv)" class="c"/>
<rect x="867" y="105" width="1" height="414" fill="#F3F1E6" class="c"/>
<rect x="868" y="105" width="1" height="414" fill="#ECE9D8" class="c"/>
<rect x="252" y="519" width="599" height="16" fill="url(#sbh)" class="c"/>
<rect x="252" y="535" width="599" height="1" fill="#F3F1E6" class="c"/>
<rect x="252" y="536" width="599" height="1" fill="#ECE9D8" class="c"/>
<rect x="851" y="519" width="18" height="18" fill="#ECE9D8" class="c"/>
<rect x="853" y="106" width="14.6" height="16" rx="3" fill="#9DB9EE"/>
<rect x="852" y="105" width="15" height="16" rx="2.5" fill="#fff"/>
<rect x="853" y="106" width="13" height="14" rx="2" fill="url(#thv)"/>
<path d="M855.5,115.5 L859.5,111.5 L863.5,115.5" fill="none" stroke="#4D6185" stroke-width="2.4"/>
<rect x="853" y="503" width="14.6" height="16" rx="3" fill="#9DB9EE"/>
<rect x="852" y="502" width="15" height="16" rx="2.5" fill="#fff"/>
<rect x="853" y="503" width="13" height="14" rx="2" fill="url(#thv)"/>
<path d="M855.5,508.0 L859.5,512.0 L863.5,508.0" fill="none" stroke="#4D6185" stroke-width="2.4"/>
<rect x="253" y="521" width="15.6" height="15" rx="3" fill="#9DB9EE"/>
<rect x="252" y="520" width="16" height="15" rx="2.5" fill="#fff"/>
<rect x="253" y="521" width="14" height="13" rx="2" fill="url(#thh)"/>
<path d="M262.0,523.5 L258.0,527.5 L262.0,531.5" fill="none" stroke="#4D6185" stroke-width="2.4"/>
<rect x="835" y="521" width="15.6" height="15" rx="3" fill="#9DB9EE"/>
<rect x="834" y="520" width="16" height="15" rx="2.5" fill="#fff"/>
<rect x="835" y="521" width="14" height="13" rx="2" fill="url(#thh)"/>
<path d="M840.0,523.5 L844.0,527.5 L840.0,531.5" fill="none" stroke="#4D6185" stroke-width="2.4"/>
<rect x="853" y="203" width="14.6" height="86" rx="3" fill="#9DB9EE"/>
<rect x="852" y="202" width="15" height="86" rx="2.5" fill="#fff"/>
<rect x="853" y="203" width="13" height="84" rx="2" fill="url(#thv)"/>
<rect x="856" y="241" width="6" height="1" fill="#EEF4FE" class="c"/>
<rect x="857" y="242" width="6" height="1" fill="#8CA4E0" class="c"/>
<rect x="856" y="243" width="6" height="1" fill="#EEF4FE" class="c"/>
<rect x="857" y="244" width="6" height="1" fill="#8CA4E0" class="c"/>
<rect x="856" y="245" width="6" height="1" fill="#EEF4FE" class="c"/>
<rect x="857" y="246" width="6" height="1" fill="#8CA4E0" class="c"/>
<rect x="856" y="247" width="6" height="1" fill="#EEF4FE" class="c"/>
<rect x="857" y="248" width="6" height="1" fill="#8CA4E0" class="c"/>
<rect x="360" y="521" width="131.6" height="15" rx="3" fill="#9DB9EE"/>
<rect x="359" y="520" width="132" height="15" rx="2.5" fill="#fff"/>
<rect x="360" y="521" width="130" height="13" rx="2" fill="url(#thh)"/>
<rect x="421" y="524" width="1" height="6" fill="#EEF4FE" class="c"/>
<rect x="422" y="525" width="1" height="6" fill="#8CA4E0" class="c"/>
<rect x="423" y="524" width="1" height="6" fill="#EEF4FE" class="c"/>
<rect x="424" y="525" width="1" height="6" fill="#8CA4E0" class="c"/>
<rect x="425" y="524" width="1" height="6" fill="#EEF4FE" class="c"/>
<rect x="426" y="525" width="1" height="6" fill="#8CA4E0" class="c"/>
<rect x="427" y="524" width="1" height="6" fill="#EEF4FE" class="c"/>
<rect x="428" y="525" width="1" height="6" fill="#8CA4E0" class="c"/>
<rect x="228" y="538" width="642" height="19" fill="url(#hatch)" class="c"/>
<rect x="228" y="538" width="642" height="1" fill="#ACA899" />
<path d="M235.5,537.5 L241.5,554.5 H319.5 L325,537.5 Z" fill="#ECE9D8" stroke="none"/>
<path d="M235.8,538 L241.5,554.5 H319.5 L324.7,538" fill="none" stroke="#000" stroke-width="1.1"/>
<rect x="230" y="537" width="22" height="1" fill="#ECE9D8" />
<rect x="252" y="537" width="617" height="1" fill="#fff" />
<text x="243.7" y="550.7" font-family='"Liberation Sans",sans-serif' font-size="10.7" fill="#000" text-anchor="start" font-weight="normal" textLength="70.7" lengthAdjust="spacingAndGlyphs" stroke="#000" stroke-width="0.2">1: Новый лист</text>
<path d="M447,134 V246 M404,384 V349 M404,280 V246 H553 M577,246 H676 V289 M676,341 V384 H404 M490,246 V310 M490,319 V384 M447,384 V423" stroke="#000" stroke-width="2" fill="none" class="c"/>
<path d="M421.5,134.5 L447,176.5 L473,134.5" stroke="#000" stroke-width="2" fill="none"/>
<path d="M404.5,280.5 C392,280.5 392,297.6 404.5,297.6 C392,297.6 392,314.70000000000005 404.5,314.70000000000005 C392,314.7 392,331.8 404.5,331.8 C392,331.8 392,348.90000000000003 404.5,348.90000000000003" stroke="#000" stroke-width="2" fill="none" stroke-linejoin="miter"/>
<path d="M473,311 H509 M473,319 H509" stroke="#000" stroke-width="2" fill="none" class="c"/>
<path d="M430,423.5 H465" stroke="#000" stroke-width="2" /><path d="M438,427.5 H457 M443,431.5 H452" stroke="#000" stroke-width="1.5"/>
<circle cx="447" cy="246" r="4.3" fill="#000"/>
<circle cx="490" cy="246" r="4.3" fill="#000"/>
<circle cx="447" cy="384" r="4.3" fill="#000"/>
<circle cx="490" cy="384" r="4.3" fill="#000"/>
<path d="M553,230 V263 L577,246.5 Z" fill="#fff" stroke="#000" stroke-width="2" stroke-linejoin="miter"/><path d="M577,229.5 V263.5" stroke="#000" stroke-width="2" class="c"/>
<rect x="659" y="289" width="43" height="52" fill="#fff" stroke="#000" stroke-width="2" class="c"/><rect x="701" y="280" width="4" height="70" fill="#000" class="c"/>
<rect x="5" y="559" width="53" height="1" fill="#ACA899" />
<rect x="5" y="559" width="1" height="26" fill="#ACA899" />
<rect x="5" y="584" width="53" height="1" fill="#fff" />
<rect x="57" y="559" width="1" height="26" fill="#fff" />
<rect x="60" y="559" width="60" height="1" fill="#ACA899" />
<rect x="60" y="559" width="1" height="26" fill="#ACA899" />
<rect x="60" y="584" width="60" height="1" fill="#fff" />
<rect x="119" y="559" width="1" height="26" fill="#fff" />
<rect x="122" y="559" width="49" height="1" fill="#ACA899" />
<rect x="122" y="559" width="1" height="26" fill="#ACA899" />
<rect x="122" y="584" width="49" height="1" fill="#fff" />
<rect x="170" y="559" width="1" height="26" fill="#fff" />
<rect x="172" y="559" width="98" height="1" fill="#ACA899" />
<rect x="172" y="559" width="1" height="26" fill="#ACA899" />
<rect x="172" y="584" width="98" height="1" fill="#fff" />
<rect x="269" y="559" width="1" height="26" fill="#fff" />
<rect x="272" y="559" width="176" height="1" fill="#ACA899" />
<rect x="272" y="559" width="1" height="26" fill="#ACA899" />
<rect x="272" y="584" width="176" height="1" fill="#fff" />
<rect x="447" y="559" width="1" height="26" fill="#fff" />
<rect x="451" y="559" width="82" height="1" fill="#ACA899" />
<rect x="451" y="559" width="1" height="26" fill="#ACA899" />
<rect x="451" y="584" width="82" height="1" fill="#fff" />
<rect x="532" y="559" width="1" height="26" fill="#fff" />
<rect x="535" y="559" width="86" height="1" fill="#ACA899" />
<rect x="535" y="559" width="1" height="26" fill="#ACA899" />
<rect x="535" y="584" width="86" height="1" fill="#fff" />
<rect x="620" y="559" width="1" height="26" fill="#fff" />
<rect x="624" y="559" width="246" height="1" fill="#ACA899" />
<rect x="624" y="559" width="1" height="26" fill="#ACA899" />
<rect x="624" y="584" width="246" height="1" fill="#fff" />
<rect x="869" y="559" width="1" height="26" fill="#fff" />
<text x="9.6" y="570" font-family='"DejaVu Sans Condensed","Liberation Sans",sans-serif' font-size="11" fill="#000" text-anchor="start" font-weight="normal" textLength="34.9" lengthAdjust="spacingAndGlyphs" >X: 59,5</text>
<text x="9.6" y="582" font-family='"DejaVu Sans Condensed","Liberation Sans",sans-serif' font-size="11" fill="#000" text-anchor="start" font-weight="normal" textLength="34.4" lengthAdjust="spacingAndGlyphs" >Y: 44,0</text>
<text x="137.4" y="570" font-family='"DejaVu Sans Condensed","Liberation Sans",sans-serif' font-size="11" fill="#000" text-anchor="start" font-weight="normal" textLength="13.8" lengthAdjust="spacingAndGlyphs" >1:1</text>
<text x="138.4" y="582" font-family='"DejaVu Sans Condensed","Liberation Sans",sans-serif' font-size="11" fill="#000" text-anchor="start" font-weight="normal" textLength="11.8" lengthAdjust="spacingAndGlyphs" >мм</text>
<text x="178" y="570" font-family='"DejaVu Sans Condensed","Liberation Sans",sans-serif' font-size="11" fill="#000" text-anchor="start" font-weight="normal" textLength="67.9" lengthAdjust="spacingAndGlyphs" >Сетка: 0,5 мм</text>
<text x="178" y="582" font-family='"DejaVu Sans Condensed","Liberation Sans",sans-serif' font-size="11" fill="#000" text-anchor="start" font-weight="normal" textLength="45.3" lengthAdjust="spacingAndGlyphs" >Масштаб:</text>
<text x="236" y="582" font-family='"DejaVu Sans Condensed","Liberation Sans",sans-serif' font-size="11" fill="#000" text-anchor="start" font-weight="normal" textLength="21.2" lengthAdjust="spacingAndGlyphs" >2,87</text>
<path d="M277,568 H292 M277,574 H292 M281,564 V579 M288,564 V579" stroke="#000" stroke-width="1.25"/>
<path d="M305.5,568 L311.5,568.8 L316,573.5 L315,576.5 L309.5,575.8 L305,571.5 Z" fill="none" stroke="#7B0000" stroke-width="3" stroke-linejoin="round"/>
<rect x="328" y="569" width="3" height="11" fill="#808080" class="c"/><rect x="332" y="568" width="8" height="3" fill="#000" class="c"/><rect x="326.5" y="566.5" width="6" height="6" fill="none" stroke="#FF0000" class="c"/>
<path d="M351.5,565 V576.5 H362" stroke="#000" fill="none" class="c"/><path d="M353,575 L360.5,567.5" stroke="#000" stroke-dasharray="1 1.2"/>
<text x="366.8" y="576" font-family='"DejaVu Sans Condensed","Liberation Sans",sans-serif' font-size="11" fill="#000" text-anchor="start" font-weight="normal" textLength="16.5" lengthAdjust="spacingAndGlyphs" >45°</text>
<path d="M412.3,569.3 A3.9,3.9 0 1 0 412.6,573" fill="none" stroke="#000" stroke-width="1.4"/><path d="M410.5,569.5 H416 L413.8,573 Z" fill="#000"/>
<text x="420.7" y="576" font-family='"DejaVu Sans Condensed","Liberation Sans",sans-serif' font-size="11" fill="#000" text-anchor="start" font-weight="normal" textLength="15.1" lengthAdjust="spacingAndGlyphs" >15°</text>
<path d="M456,572.5 H500" stroke="#000" class="c"/><rect x="507.5" y="565.5" width="18" height="14" fill="none" stroke="#000" class="c"/>
<text x="627.7" y="570" font-family='"DejaVu Sans Condensed","Liberation Sans",sans-serif' font-size="11" fill="#000" text-anchor="start" font-weight="normal" textLength="40.2" lengthAdjust="spacingAndGlyphs" >Правка:</text>
<text x="672" y="570" font-family='"DejaVu Sans Condensed","Liberation Sans",sans-serif' font-size="11" fill="#000" text-anchor="start" font-weight="normal" textLength="34.3" lengthAdjust="spacingAndGlyphs" >Выбор,</text>
<text x="710.1" y="570" font-family='"DejaVu Sans Condensed","Liberation Sans",sans-serif' font-size="11" fill="#000" text-anchor="start" font-weight="normal" textLength="71.2" lengthAdjust="spacingAndGlyphs" >перемещение,</text>
<text x="787.2" y="570" font-family='"DejaVu Sans Condensed","Liberation Sans",sans-serif' font-size="11" fill="#000" text-anchor="start" font-weight="normal" textLength="51.4" lengthAdjust="spacingAndGlyphs" >вращение,</text>
<text x="844.4" y="570" font-family='"DejaVu Sans Condensed","Liberation Sans",sans-serif' font-size="11" fill="#000" text-anchor="start" font-weight="normal" textLength="48.6" lengthAdjust="spacingAndGlyphs" >удаление</text>
<text x="628.2" y="582" font-family='"DejaVu Sans Condensed","Liberation Sans",sans-serif' font-size="11" fill="#000" text-anchor="start" font-weight="normal" textLength="36.4" lengthAdjust="spacingAndGlyphs" >&lt;Shift&gt;</text>
<text x="668.8" y="582" font-family='"DejaVu Sans Condensed","Liberation Sans",sans-serif' font-size="11" fill="#000" text-anchor="start" font-weight="normal" textLength="60.5" lengthAdjust="spacingAndGlyphs" >отключение</text>
<text x="735.1" y="582" font-family='"DejaVu Sans Condensed","Liberation Sans",sans-serif' font-size="11" fill="#000" text-anchor="start" font-weight="normal" textLength="46.2" lengthAdjust="spacingAndGlyphs" >привязки,</text>
<text x="789.2" y="582" font-family='"DejaVu Sans Condensed","Liberation Sans",sans-serif' font-size="11" fill="#000" text-anchor="start" font-weight="normal" textLength="43.0" lengthAdjust="spacingAndGlyphs" >&lt;Space&gt;</text>
<text x="835.7" y="582" font-family='"DejaVu Sans Condensed","Liberation Sans",sans-serif' font-size="11" fill="#000" text-anchor="start" font-weight="normal" textLength="7.6" lengthAdjust="spacingAndGlyphs" >=</text>
<text x="851.1" y="582" font-family='"DejaVu Sans Condensed","Liberation Sans",sans-serif' font-size="11" fill="#000" text-anchor="start" font-weight="normal" textLength="43.5" lengthAdjust="spacingAndGlyphs" >масштаб</text>
<rect x="870" y="540" width="1" height="45" fill="#0A4CE4" class="c"/>
<rect x="871" y="540" width="1" height="46" fill="#0540DC" class="c"/>
<rect x="872" y="540" width="1" height="47" fill="#0230B8" class="c"/>
<rect x="873" y="540" width="1" height="48" fill="#001A90" class="c"/>
<rect x="869" y="560" width="1" height="24" fill="#fff" class="c"/>
<path d="M867,584 L869,582 M863,584 L869,578 M859,584 L869,574" stroke="#ACA899" stroke-width="1.4"/>
</svg>
</body></html>
